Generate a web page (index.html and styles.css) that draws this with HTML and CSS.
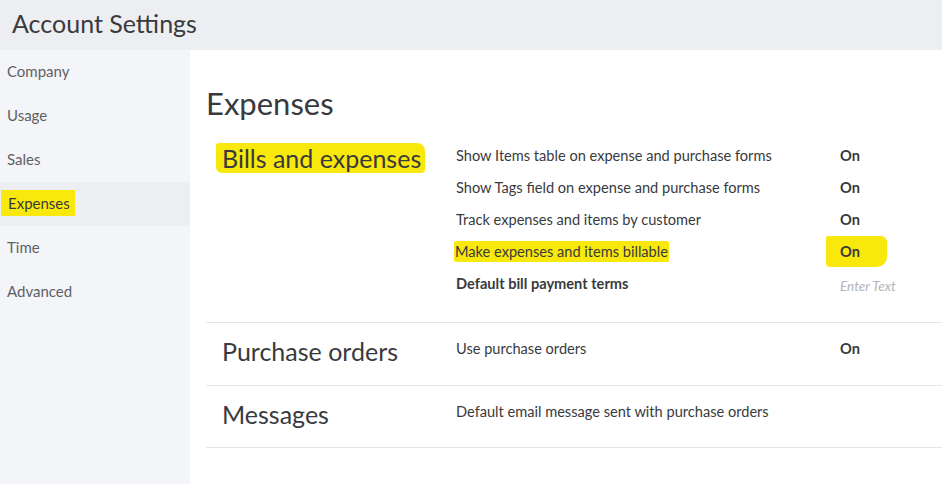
FILE: index.html
```html
<!DOCTYPE html>
<html>
<head>
<meta charset="utf-8">
<link rel="stylesheet" href="styles.css">
</head>
<body>
<div class="app">
  <header class="topbar">Account Settings</header>
  <div class="main">
    <nav class="sidebar">
      <div class="nav-item">Company</div>
      <div class="nav-item">Usage</div>
      <div class="nav-item">Sales</div>
      <div class="nav-item active"><span class="hl hl-nav">Expenses</span></div>
      <div class="nav-item">Time</div>
      <div class="nav-item">Advanced</div>
    </nav>
    <main class="content">
      <h1 class="page-title">Expenses</h1>
      <section class="section first">
        <h2 class="section-title"><span class="hl hl-title">Bills and expenses</span></h2>
        <div class="rows">
          <div class="row"><span class="label">Show Items table on expense and purchase forms</span><span class="value">On</span></div>
          <div class="row"><span class="label">Show Tags field on expense and purchase forms</span><span class="value">On</span></div>
          <div class="row"><span class="label">Track expenses and items by customer</span><span class="value">On</span></div>
          <div class="row"><span class="label"><span class="hl hl-label">Make expenses and items billable</span></span><span class="value"><span class="hl hl-on">On</span></span></div>
          <div class="row"><span class="label bold">Default bill payment terms</span><span class="value placeholder">Enter Text</span></div>
        </div>
      </section>
      <section class="section">
        <h2 class="section-title">Purchase orders</h2>
        <div class="rows">
          <div class="row"><span class="label">Use purchase orders</span><span class="value">On</span></div>
        </div>
      </section>
      <section class="section last">
        <h2 class="section-title">Messages</h2>
        <div class="rows">
          <div class="row"><span class="label">Default email message sent with purchase orders</span><span class="value"></span></div>
        </div>
      </section>
    </main>
  </div>
</div>
</body>
</html>
```

FILE: styles.css
```css
* { box-sizing: border-box; }
html, body { margin: 0; padding: 0; }
body {
  font-family: Lato, "Open Sans", sans-serif;
  color: #393a3d;
  background: #fff;
  width: 942px;
  height: 484px;
  overflow: hidden;
}
.app { display: flex; flex-direction: column; height: 484px; }
.topbar {
  height: 50px;
  background: #eceef1;
  font-size: 25px;
  line-height: 46px;
  padding-left: 12px;
  color: #393a3d;
}
.main { display: flex; flex: 1; }
.sidebar {
  width: 190px;
  background: #f4f5f8;
  flex-shrink: 0;
}
.nav-item {
  height: 44px;
  line-height: 43px;
  padding-left: 7px;
  font-size: 15px;
  color: #5f6066;
}
.nav-item.active { background: #eceef1; color: #393a3d; }
.hl { background: #f9e80b; }
.hl-nav { padding: 4px 5px 4px 7px; margin-left: -6px; }
.content { flex: 1; padding-left: 16px; }
.page-title {
  font-weight: 400;
  font-size: 31px;
  margin: 0;
  padding-top: 33px;
  line-height: 40px;
  height: 80px;
}
.section {
  display: flex;
  padding: 9px 0 21px;
  border-bottom: 1px solid #e3e5e8;
}
.section.first { padding-top: 9px; padding-bottom: 23px; }
.section.last { padding-bottom: 20px; }
.section-title {
  width: 250px;
  flex-shrink: 0;
  margin: 0;
  font-weight: 400;
  font-size: 25px;
  line-height: 30px;
  height: 32px;
  padding: 4px 0 0 16px;
}
.hl-title { padding: 0 4px 0 6px; margin-left: -6px; border-radius: 3px 8px 4px 6px; }
.rows { flex: 1; }
.row {
  display: flex;
  height: 32px;
  align-items: center;
  font-size: 14.6px;
}
.label { width: 384px; flex-shrink: 0; }
.label.bold { font-weight: 700; }
.hl-label { padding: 2px 1px; margin-left: -2px; border-radius: 2px; }
.value { font-weight: 700; }
.hl-on { padding: 7px 27px 7px 14px; margin-left: -14px; border-radius: 2px 6px 10px 4px; }
.placeholder { font-weight: 400; font-style: italic; color: #b4b6ba; font-size: 13.5px; padding-top: 6px; }
```
